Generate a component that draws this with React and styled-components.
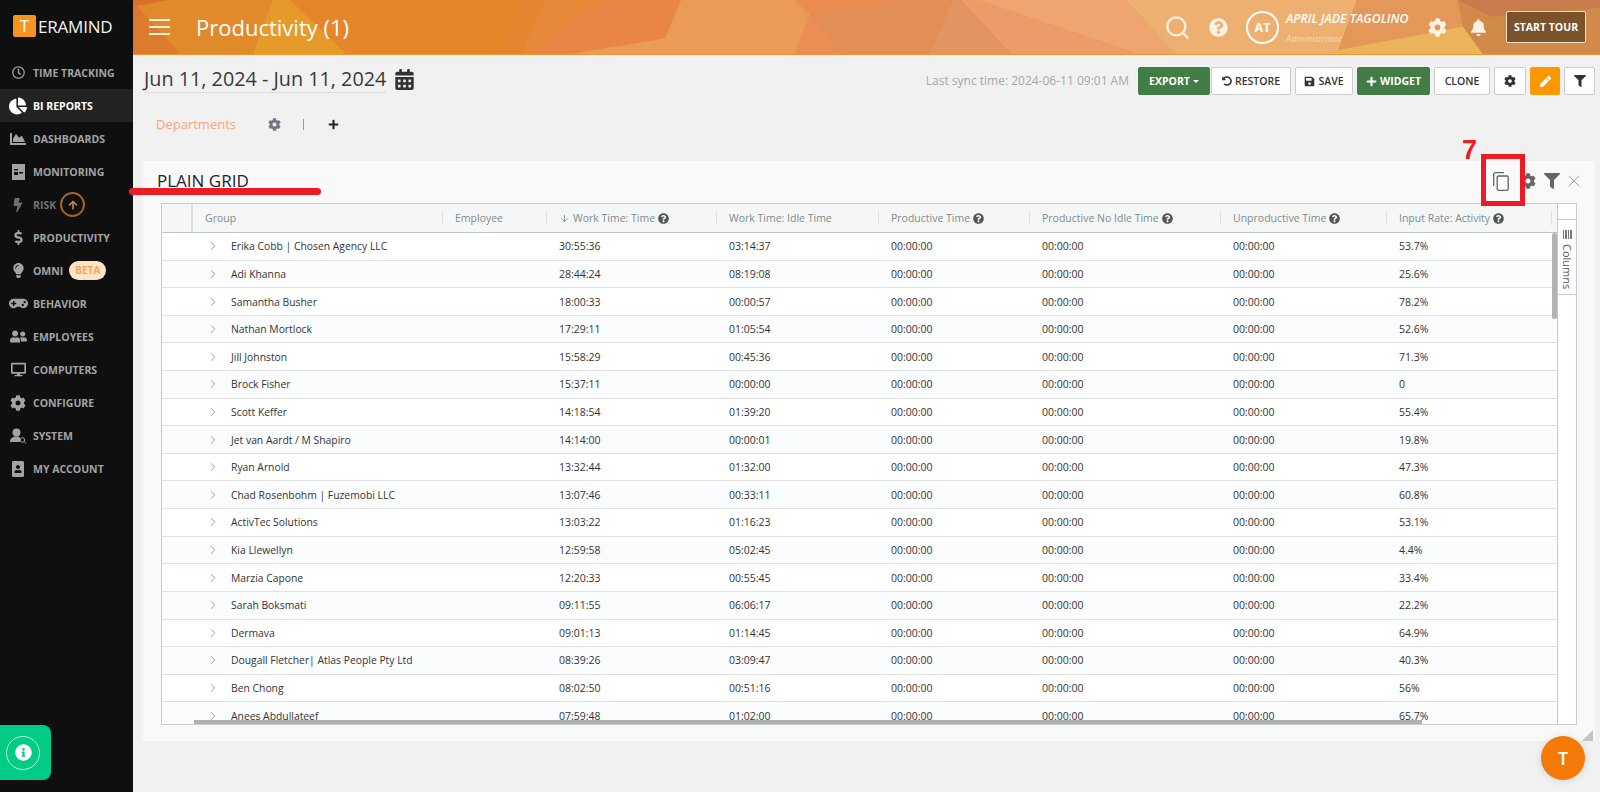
import React from "react";
import styled, { createGlobalStyle } from "styled-components";
import {
  FaRegClock, FaChartPie, FaChartArea, FaBolt, FaDollarSign, FaLightbulb, FaGamepad,
  FaUserFriends, FaDesktop, FaCog, FaPortrait, FaQuestionCircle, FaBell,
  FaUndoAlt, FaSave, FaPlus, FaPen, FaFilter, FaCalendarAlt, FaArrowUp, FaInfoCircle,
} from "react-icons/fa";
import { FiChevronRight, FiArrowDown, FiX, FiSearch } from "react-icons/fi";

const GlobalStyle = createGlobalStyle`
  html, body { margin: 0; padding: 0; height: 100%; background: #f1f1f1; overflow: hidden; }
  * { box-sizing: border-box; }
  body { font-family: "Open Sans", "Noto Sans", sans-serif; }
`;

const NAV = [
  { label: "TIME TRACKING", icon: <FaRegClock size={13} /> },
  { label: "BI REPORTS", icon: <FaChartPie size={18} />, active: true },
  { label: "DASHBOARDS", icon: <FaChartArea size={16} /> },
  { label: "MONITORING", icon: <MonitoringIcon /> },
  { label: "RISK", icon: <FaBolt size={14} />, dim: true, upgrade: true },
  { label: "PRODUCTIVITY", icon: <FaDollarSign size={15} /> },
  { label: "OMNI", icon: <FaLightbulb size={15} />, beta: true },
  { label: "BEHAVIOR", icon: <FaGamepad size={19} /> },
  { label: "EMPLOYEES", icon: <FaUserFriends size={17} /> },
  { label: "COMPUTERS", icon: <FaDesktop size={15} /> },
  { label: "CONFIGURE", icon: <FaCog size={16} /> },
  { label: "SYSTEM", icon: <SystemIcon /> },
  { label: "MY ACCOUNT", icon: <FaPortrait size={16} /> },
];

const COLUMNS = [
  { title: "Group", width: 250 },
  { title: "Employee", width: 104 },
  { title: "Work Time: Time", width: 170, sorted: true, help: true },
  { title: "Work Time: Idle Time", width: 162 },
  { title: "Productive Time", width: 151, help: true },
  { title: "Productive No Idle Time", width: 191, help: true },
  { title: "Unproductive Time", width: 166, help: true },
  { title: "Input Rate: Activity", width: 165, help: true },
];

const ROWS = [
  ["Erika Cobb | Chosen Agency LLC", "30:55:36", "03:14:37", "53.7%"],
  ["Adi Khanna", "28:44:24", "08:19:08", "25.6%"],
  ["Samantha Busher", "18:00:33", "00:00:57", "78.2%"],
  ["Nathan Mortlock", "17:29:11", "01:05:54", "52.6%"],
  ["Jill Johnston", "15:58:29", "00:45:36", "71.3%"],
  ["Brock Fisher", "15:37:11", "00:00:00", "0"],
  ["Scott Keffer", "14:18:54", "01:39:20", "55.4%"],
  ["Jet van Aardt / M Shapiro", "14:14:00", "00:00:01", "19.8%"],
  ["Ryan Arnold", "13:32:44", "01:32:00", "47.3%"],
  ["Chad Rosenbohm | Fuzemobi LLC", "13:07:46", "00:33:11", "60.8%"],
  ["ActivTec Solutions", "13:03:22", "01:16:23", "53.1%"],
  ["Kia Llewellyn", "12:59:58", "05:02:45", "4.4%"],
  ["Marzia Capone", "12:20:33", "00:55:45", "33.4%"],
  ["Sarah Boksmati", "09:11:55", "06:06:17", "22.2%"],
  ["Dermava", "09:01:13", "01:14:45", "64.9%"],
  ["Dougall Fletcher| Atlas People Pty Ltd", "08:39:26", "03:09:47", "40.3%"],
  ["Ben Chong", "08:02:50", "00:51:16", "56%"],
  ["Anees Abdullateef", "07:59:48", "01:02:00", "65.7%"],
];

// header background facets, in page coordinates
const FACETS = [
  ["#e5862b", "133,0 1600,0 1600,55 133,55"],
  ["#d9702c", "133,0 170,0 137,6 133,8"],
  ["#e08a2c", "137,6 170,0 273,0 253,55 180,55"],
  ["#dc7a2e", "133,8 137,6 180,55 133,55"],
  ["#e69a2a", "273,0 290,0 346,55 253,55"],
  ["#e68530", "520,0 545,0 521,55 500,55"],
  ["#e8883a", "545,0 601,0 531,55 521,55"],
  ["#ea8545", "601,0 681,0 665,39 570,55 531,55"],
  ["#ea9b57", "681,0 795,0 810,15 795,55 570,55 665,39"],
  ["#ea8c50", "795,0 909,0 810,15"],
  ["#e28f57", "810,15 909,0 953,0 929,55 843,55"],
  ["#ea8e55", "810,15 843,55 795,55"],
  ["#e29560", "953,0 961,0 1011,55 929,55"],
  ["#eb9c69", "961,0 977,0 1138,55 1011,55"],
  ["#eea56f", "977,0 1126,0 1175,55 1138,55"],
  ["#eeb070", "1126,0 1357,0 1337,55 1175,55"],
  ["#e39758", "1357,0 1458,0 1463,27 1343,50 1337,55"],
  ["#ebb35a", "1343,50 1463,27 1483,55 1330,55"],
  ["#d18a4a", "1458,0 1600,0 1600,55 1483,55 1463,27"],
  ["#c87c4c", "1458,0 1600,0 1600,8 1492,17"],
];

function MonitoringIcon() {
  return (
    <svg width="13" height="16" viewBox="0 0 13 16">
      <rect width="13" height="16" fill="currentColor" />
      <rect x="2" y="5" width="4" height="1.5" fill="#111" />
      <rect x="7" y="8" width="4" height="1.5" fill="#111" />
      <rect x="2" y="8" width="4" height="3" fill="#111" />
    </svg>
  );
}

function SystemIcon() {
  return (
    <svg width="17" height="16" viewBox="0 0 17 16">
      <circle cx="6.5" cy="4.5" r="4" fill="currentColor" />
      <path d="M0 14c0-4 3-5 4.5-5.5h4C10 9 10 10 10 11v3z" fill="currentColor" />
      <circle cx="12.5" cy="12" r="2.2" fill="none" stroke="currentColor" />
      <path d="M14 13.5l2 2" stroke="currentColor" />
    </svg>
  );
}

function CopyIcon() {
  return (
    <svg width="16" height="19" viewBox="0 0 16 19" fill="none" stroke="#666" strokeWidth="1.3">
      <path d="M11 .7H2.2A1.5 1.5 0 0 0 .7 2.2V14" />
      <rect x="4.2" y="4" width="11" height="14.3" rx="1.2" />
    </svg>
  );
}

function App() {
  return (
    <Page>
      <GlobalStyle />
      <Sidebar>
        <Logo>
          <LogoMark>T</LogoMark>
          <LogoText>ERAMIND</LogoText>
        </Logo>
        <Nav>
          {NAV.map((item) => (
            <NavItem key={item.label} $active={item.active} $dim={item.dim}>
              <NavIcon>{item.icon}</NavIcon>
              <span>{item.label}</span>
              {item.upgrade && (
                <UpgradeBadge>
                  <FaArrowUp size={10} />
                </UpgradeBadge>
              )}
              {item.beta && <BetaBadge>BETA</BetaBadge>}
            </NavItem>
          ))}
        </Nav>
        <InfoTab>
          <InfoRing>
            <FaInfoCircle size={17} />
          </InfoRing>
        </InfoTab>
      </Sidebar>

      <Main>
        <TopBar>
          <Facets viewBox="133 0 1467 55" preserveAspectRatio="none">
            {FACETS.map(([fill, points]) => (
              <polygon key={points} fill={fill} points={points} />
            ))}
          </Facets>
          <Burger>
            <i />
            <i />
            <i />
          </Burger>
          <PageTitle>Productivity (1)</PageTitle>
          <TopActions>
            <TopIcon $w={41}>
              <FiSearch size={27} strokeWidth={2.1} />
            </TopIcon>
            <TopIcon $w={41}>
              <FaQuestionCircle size={19} />
            </TopIcon>
            <Avatar>AT</Avatar>
            <UserInfo>
              <UserName>APRIL JADE TAGOLINO</UserName>
              <UserRole>Administrator</UserRole>
            </UserInfo>
            <TopIcon $w={41}>
              <FaCog size={19} />
            </TopIcon>
            <TopIcon $w={41}>
              <FaBell size={17} />
            </TopIcon>
            <TourButton>START TOUR</TourButton>
          </TopActions>
        </TopBar>

        <Toolbar>
          <DateRange>Jun 11, 2024 - Jun 11, 2024</DateRange>
          <CalendarIcon>
            <FaCalendarAlt size={21} />
          </CalendarIcon>
          <SyncTime>Last sync time: 2024-06-11 09:01 AM</SyncTime>
          <Buttons>
            <Button $green $w={72}>
              EXPORT <Caret />
            </Button>
            <Button $w={80} $joined>
              <FaUndoAlt size={10} /> RESTORE
            </Button>
            <Button $w={58}>
              <FaSave size={11} /> SAVE
            </Button>
            <Button $green $w={73}>
              <FaPlus size={11} /> WIDGET
            </Button>
            <Button $w={56}>CLONE</Button>
            <Button $w={32}>
              <FaCog size={12} />
            </Button>
            <Button $orange $w={30}>
              <FaPen size={11} />
            </Button>
            <Button $w={31}>
              <FaFilter size={12} />
            </Button>
          </Buttons>
        </Toolbar>

        <Tabs>
          <TabLabel>Departments</TabLabel>
          <TabGear>
            <FaCog size={13} />
          </TabGear>
          <TabDivider />
          <TabAdd>
            <FaPlus size={11} />
          </TabAdd>
        </Tabs>

        <Panel>
          <PanelHead>
            <PanelTitle>PLAIN GRID</PanelTitle>
            <PanelIcons>
              <CopyIcon />
              <PanelGear>
                <FaCog size={16} />
              </PanelGear>
              <PanelFilter>
                <FaFilter size={16} />
              </PanelFilter>
              <CloseIcon>
                <FiX size={20} strokeWidth={1.1} />
              </CloseIcon>
            </PanelIcons>
            <RedUnderline />
            <StepNumber>7</StepNumber>
            <RedBox />
          </PanelHead>

          <Grid>
            <GridMain>
              <HeadRow>
                <GutterHead />
                {COLUMNS.map((col) => (
                  <HeadCell key={col.title} $width={col.width}>
                    {col.sorted && <FiArrowDown size={11} />}
                    <span>{col.title}</span>
                    {col.help && <FaQuestionCircle size={11} color="#555" />}
                  </HeadCell>
                ))}
              </HeadRow>
              <Body>
                {ROWS.map(([name, time, idle, rate], i) => (
                  <Row key={name} $odd={i % 2 === 1}>
                    <Gutter />
                    <GroupCell $width={COLUMNS[0].width}>
                      <FiChevronRight size={14} strokeWidth={1.4} />
                      <span>{name}</span>
                    </GroupCell>
                    <Cell $width={COLUMNS[1].width} />
                    <Cell $width={COLUMNS[2].width}>{time}</Cell>
                    <Cell $width={COLUMNS[3].width}>{idle}</Cell>
                    <Cell $width={COLUMNS[4].width}>00:00:00</Cell>
                    <Cell $width={COLUMNS[5].width}>00:00:00</Cell>
                    <Cell $width={COLUMNS[6].width}>00:00:00</Cell>
                    <Cell $width={COLUMNS[7].width}>{rate}</Cell>
                  </Row>
                ))}
                <VScroll />
                <HScroll />
              </Body>
            </GridMain>
            <SidePanel>
              <ColumnsTab>
                <BarsGlyph>
                  <i />
                  <i />
                  <i />
                  <i />
                </BarsGlyph>
                <ColumnsLabel>Columns</ColumnsLabel>
              </ColumnsTab>
            </SidePanel>
          </Grid>
          <ResizeHandle />
        </Panel>
        <ChatBubble>T</ChatBubble>
      </Main>
    </Page>
  );
}

export default App;

const Page = styled.div`
  display: flex;
  width: 1600px;
  height: 792px;
  overflow: hidden;
  position: relative;
`;

const Sidebar = styled.aside`
  width: 133px;
  flex: none;
  background: #0f0f0f;
  position: relative;
`;

const Logo = styled.div`
  height: 56px;
  display: flex;
  align-items: center;
  padding: 0 0 4px 13px;
`;

const LogoMark = styled.div`
  width: 23px;
  height: 22px;
  border-radius: 2px;
  background: #f7941d;
  color: #fff;
  font-size: 17px;
  text-align: center;
  line-height: 22px;
`;

const LogoText = styled.div`
  color: #f2f2f2;
  font-size: 17px;
  margin-left: 2px;
  letter-spacing: -0.2px;
`;

const Nav = styled.nav`
  display: flex;
  flex-direction: column;
`;

const NavItem = styled.div`
  height: 33px;
  display: flex;
  align-items: center;
  font-size: 10.5px;
  font-weight: 700;
  color: ${(p) => (p.$active ? "#fff" : p.$dim ? "#6f6f6f" : "#a3a3a3")};
  background: ${(p) => (p.$active ? "#222" : "transparent")};
`;

const NavIcon = styled.span`
  width: 33px;
  flex: none;
  display: flex;
  justify-content: center;
  padding-left: 3px;
`;

const UpgradeBadge = styled.span`
  width: 25px;
  height: 25px;
  margin-left: 4px;
  border-radius: 50%;
  border: 2px solid #a3622a;
  color: #d08b45;
  display: flex;
  align-items: center;
  justify-content: center;
`;

const BetaBadge = styled.span`
  margin-left: 6px;
  padding: 0 6px;
  height: 19px;
  line-height: 19px;
  border-radius: 10px;
  background: #fde3c8;
  color: #f5a55b;
  font-size: 10px;
`;

const InfoTab = styled.div`
  position: absolute;
  left: 0;
  top: 725px;
  width: 51px;
  height: 55px;
  background: #00cc85;
  border-radius: 0 8px 8px 0;
  display: flex;
  align-items: center;
  justify-content: center;
  color: #fff;
`;

const InfoRing = styled.div`
  width: 34px;
  height: 34px;
  margin-right: 5px;
  border-radius: 50%;
  border: 1px solid #bdf0dc;
  display: flex;
  align-items: center;
  justify-content: center;
`;

const Main = styled.main`
  flex: 1;
  min-width: 0;
  position: relative;
  display: flex;
  flex-direction: column;
`;

const TopBar = styled.header`
  height: 55px;
  flex: none;
  position: relative;
  display: flex;
  align-items: center;
  padding: 0 14px 0 16px;
  color: #fff;
  border-bottom: 1px solid #f0952a;
`;

const Facets = styled.svg`
  position: absolute;
  inset: 0;
  width: 100%;
  height: 100%;
`;

const Burger = styled.div`
  position: relative;
  width: 21px;
  display: flex;
  flex-direction: column;
  gap: 4.5px;
  i {
    height: 2.5px;
    background: #fdf0e0;
    display: block;
  }
`;

const PageTitle = styled.h1`
  position: relative;
  margin: 0 0 0 26px;
  font-size: 22px;
  font-weight: 400;
`;

const TopActions = styled.div`
  position: relative;
  margin-left: auto;
  display: flex;
  align-items: center;
`;

const TopIcon = styled.span`
  width: ${(p) => p.$w}px;
  display: flex;
  justify-content: center;
  color: #fdf1e4;
`;

const Avatar = styled.div`
  width: 33px;
  height: 33px;
  margin-left: 7px;
  border-radius: 50%;
  border: 2px solid #fff;
  display: flex;
  align-items: center;
  justify-content: center;
  font-size: 12.5px;
  font-weight: 700;
`;

const UserInfo = styled.div`
  width: 131px;
  margin-left: 7px;
  font-style: italic;
`;

const UserName = styled.div`
  font-size: 12.3px;
  font-weight: 600;
  white-space: nowrap;
  margin-bottom: 5px;
`;

const UserRole = styled.div`
  font-size: 9.2px;
  color: #f8d9b5;
`;

const TourButton = styled.div`
  width: 80px;
  height: 32px;
  margin-left: 7px;
  background: #7b5229;
  border: 1px solid #f0e0cc;
  border-radius: 2px;
  font-size: 10.5px;
  font-weight: 700;
  display: flex;
  align-items: center;
  justify-content: center;
`;

const Toolbar = styled.div`
  height: 50px;
  flex: none;
  display: flex;
  align-items: center;
  padding: 0 5px 0 11px;
`;

const DateRange = styled.div`
  font-size: 19.8px;
  color: #3a3a3a;
  border-bottom: 1px solid #ddd;
  line-height: 26px;
  height: 27px;
  margin-top: -2px;
`;

const CalendarIcon = styled.span`
  margin: -2px 0 0 8px;
  color: #333;
  display: flex;
`;

const SyncTime = styled.span`
  margin-left: auto;
  margin-right: 9px;
  font-size: 12px;
  color: #a8a8a8;
`;

const Buttons = styled.div`
  display: flex;
  gap: 4px;
  margin-top: 2px;
`;

const Button = styled.div`
  width: ${(p) => p.$w}px;
  height: 28px;
  display: flex;
  align-items: center;
  justify-content: center;
  gap: 3px;
  font-size: 10.5px;
  font-weight: ${(p) => (p.$green ? 700 : 600)};
  border-radius: 2px;
  margin-left: ${(p) => (p.$joined ? "-3px" : "0")};
  color: ${(p) => (p.$green || p.$orange ? "#fff" : "#333")};
  background: ${(p) => (p.$green ? "#417d45" : p.$orange ? "#ff9800" : "#fff")};
  border: 1px solid ${(p) => (p.$green ? "#417d45" : p.$orange ? "#ff9800" : "#ccc")};
`;

const Caret = styled.i`
  width: 0;
  height: 0;
  border: 3.5px solid transparent;
  border-top-color: #fff;
  border-bottom: 0;
`;

const Tabs = styled.div`
  height: 56px;
  flex: none;
  display: flex;
  align-items: center;
  padding-left: 23px;
  padding-bottom: 18px;
`;

const TabLabel = styled.span`
  font-size: 13px;
  color: #f9a57a;
`;

const TabGear = styled.span`
  margin-left: 32px;
  color: #6f7680;
  display: flex;
`;

const TabDivider = styled.i`
  margin-left: 22px;
  width: 1px;
  height: 11px;
  background: #999;
`;

const TabAdd = styled.span`
  margin-left: 24px;
  color: #222;
  display: flex;
`;

const Panel = styled.section`
  position: relative;
  margin-left: 10px;
  width: 1452px;
  height: 580px;
  background: #f9f9f9;
  padding: 0 18px;
`;

const PanelHead = styled.div`
  height: 42px;
  position: relative;
  display: flex;
  align-items: center;
  justify-content: space-between;
  padding-bottom: 2px;
`;

const PanelTitle = styled.h2`
  margin: 0 0 2px -4px;
  font-size: 17px;
  font-weight: 400;
  color: #1c2530;
`;

const PanelIcons = styled.div`
  display: flex;
  align-items: center;
  gap: 8px;
  color: #666;
  margin-right: -7px;
`;

const PanelGear = styled.span`
  display: flex;
  margin-left: 3px;
`;

const PanelFilter = styled.span`
  display: flex;
`;

const CloseIcon = styled.span`
  color: #999;
  display: flex;
  margin-left: -4px;
`;

const RedUnderline = styled.i`
  position: absolute;
  left: -32px;
  top: 27px;
  width: 192px;
  height: 7px;
  border-radius: 4px;
  background: #ed1c24;
`;

const StepNumber = styled.span`
  position: absolute;
  left: 1301px;
  top: -26px;
  font: 700 27px "Liberation Sans", sans-serif;
  color: #ed1c24;
`;

const RedBox = styled.i`
  position: absolute;
  left: 1320px;
  top: -7px;
  width: 44px;
  height: 52px;
  border: 5px solid #ed1c24;
`;

const Grid = styled.div`
  display: flex;
  height: 522px;
  border: 1px solid #c6cbcb;
  background: #fff;
`;

const GridMain = styled.div`
  width: 1395px;
  flex: none;
  display: flex;
  flex-direction: column;
  min-height: 0;
`;

const HeadRow = styled.div`
  height: 29px;
  flex: none;
  display: flex;
  background: #f5f7f7;
  border-bottom: 1px solid #bdc3c7;
`;

const GutterHead = styled.div`
  width: 31px;
  border-right: 2px solid #dde0e0;
`;

const HeadCell = styled.div`
  width: ${(p) => p.$width}px;
  flex: none;
  position: relative;
  display: flex;
  align-items: center;
  gap: 3px;
  padding-left: 12px;
  font-size: 10.5px;
  color: #7f8c8d;
  &::after {
    content: "";
    position: absolute;
    right: 0;
    top: 7px;
    height: 14px;
    border-right: 1px solid #e0e3e3;
  }
`;

const Body = styled.div`
  flex: 1;
  min-height: 0;
  position: relative;
  overflow: hidden;
`;

const Row = styled.div`
  height: 27.62px;
  display: flex;
  background: ${(p) => (p.$odd ? "#fbfcfe" : "#fff")};
  border-bottom: 1px solid #e2e2e2;
`;

const Gutter = styled.div`
  width: 31px;
  flex: none;
`;

const Cell = styled.div`
  width: ${(p) => p.$width}px;
  flex: none;
  padding-left: 12px;
  display: flex;
  align-items: center;
  font-size: 10.5px;
  color: #333;
  white-space: nowrap;
`;

const GroupCell = styled(Cell)`
  padding-left: 13px;
  gap: 11px;
  font-size: 10.35px;
  svg {
    color: #888;
    flex: none;
  }
`;

const VScroll = styled.i`
  position: absolute;
  right: 0;
  top: 0;
  width: 5px;
  height: 86px;
  border-radius: 2px;
  background: #b3b3b3;
`;

const HScroll = styled.i`
  position: absolute;
  left: 32px;
  bottom: 0;
  width: 1228px;
  height: 4px;
  background: #b0b0b0;
`;

const SidePanel = styled.div`
  flex: 1;
  border-left: 1px solid #c6cbcb;
  padding-top: 15px;
`;

const ColumnsTab = styled.div`
  height: 76px;
  border-top: 1px solid #c6cbcb;
  border-bottom: 1px solid #c6cbcb;
  display: flex;
  flex-direction: column;
  align-items: center;
  padding-top: 10px;
  gap: 5px;
  color: #555;
`;

const BarsGlyph = styled.span`
  display: flex;
  gap: 1px;
  i {
    width: 1.5px;
    height: 9px;
    background: #777;
  }
`;

const ColumnsLabel = styled.span`
  writing-mode: vertical-rl;
  font-size: 11px;
  color: #555;
`;

const ResizeHandle = styled.i`
  position: absolute;
  right: 2px;
  bottom: 0;
  width: 0;
  height: 0;
  border-style: solid;
  border-width: 0 0 11px 11px;
  border-color: transparent transparent #c4c4c4 transparent;
`;

const ChatBubble = styled.div`
  position: absolute;
  left: 1408px;
  top: 736px;
  width: 44px;
  height: 44px;
  border-radius: 50%;
  background: #f37a07;
  color: #fff;
  font-size: 18px;
  font-weight: 600;
  display: flex;
  align-items: center;
  justify-content: center;
  box-shadow: 0 1px 8px rgba(0, 0, 0, 0.12);
`;
